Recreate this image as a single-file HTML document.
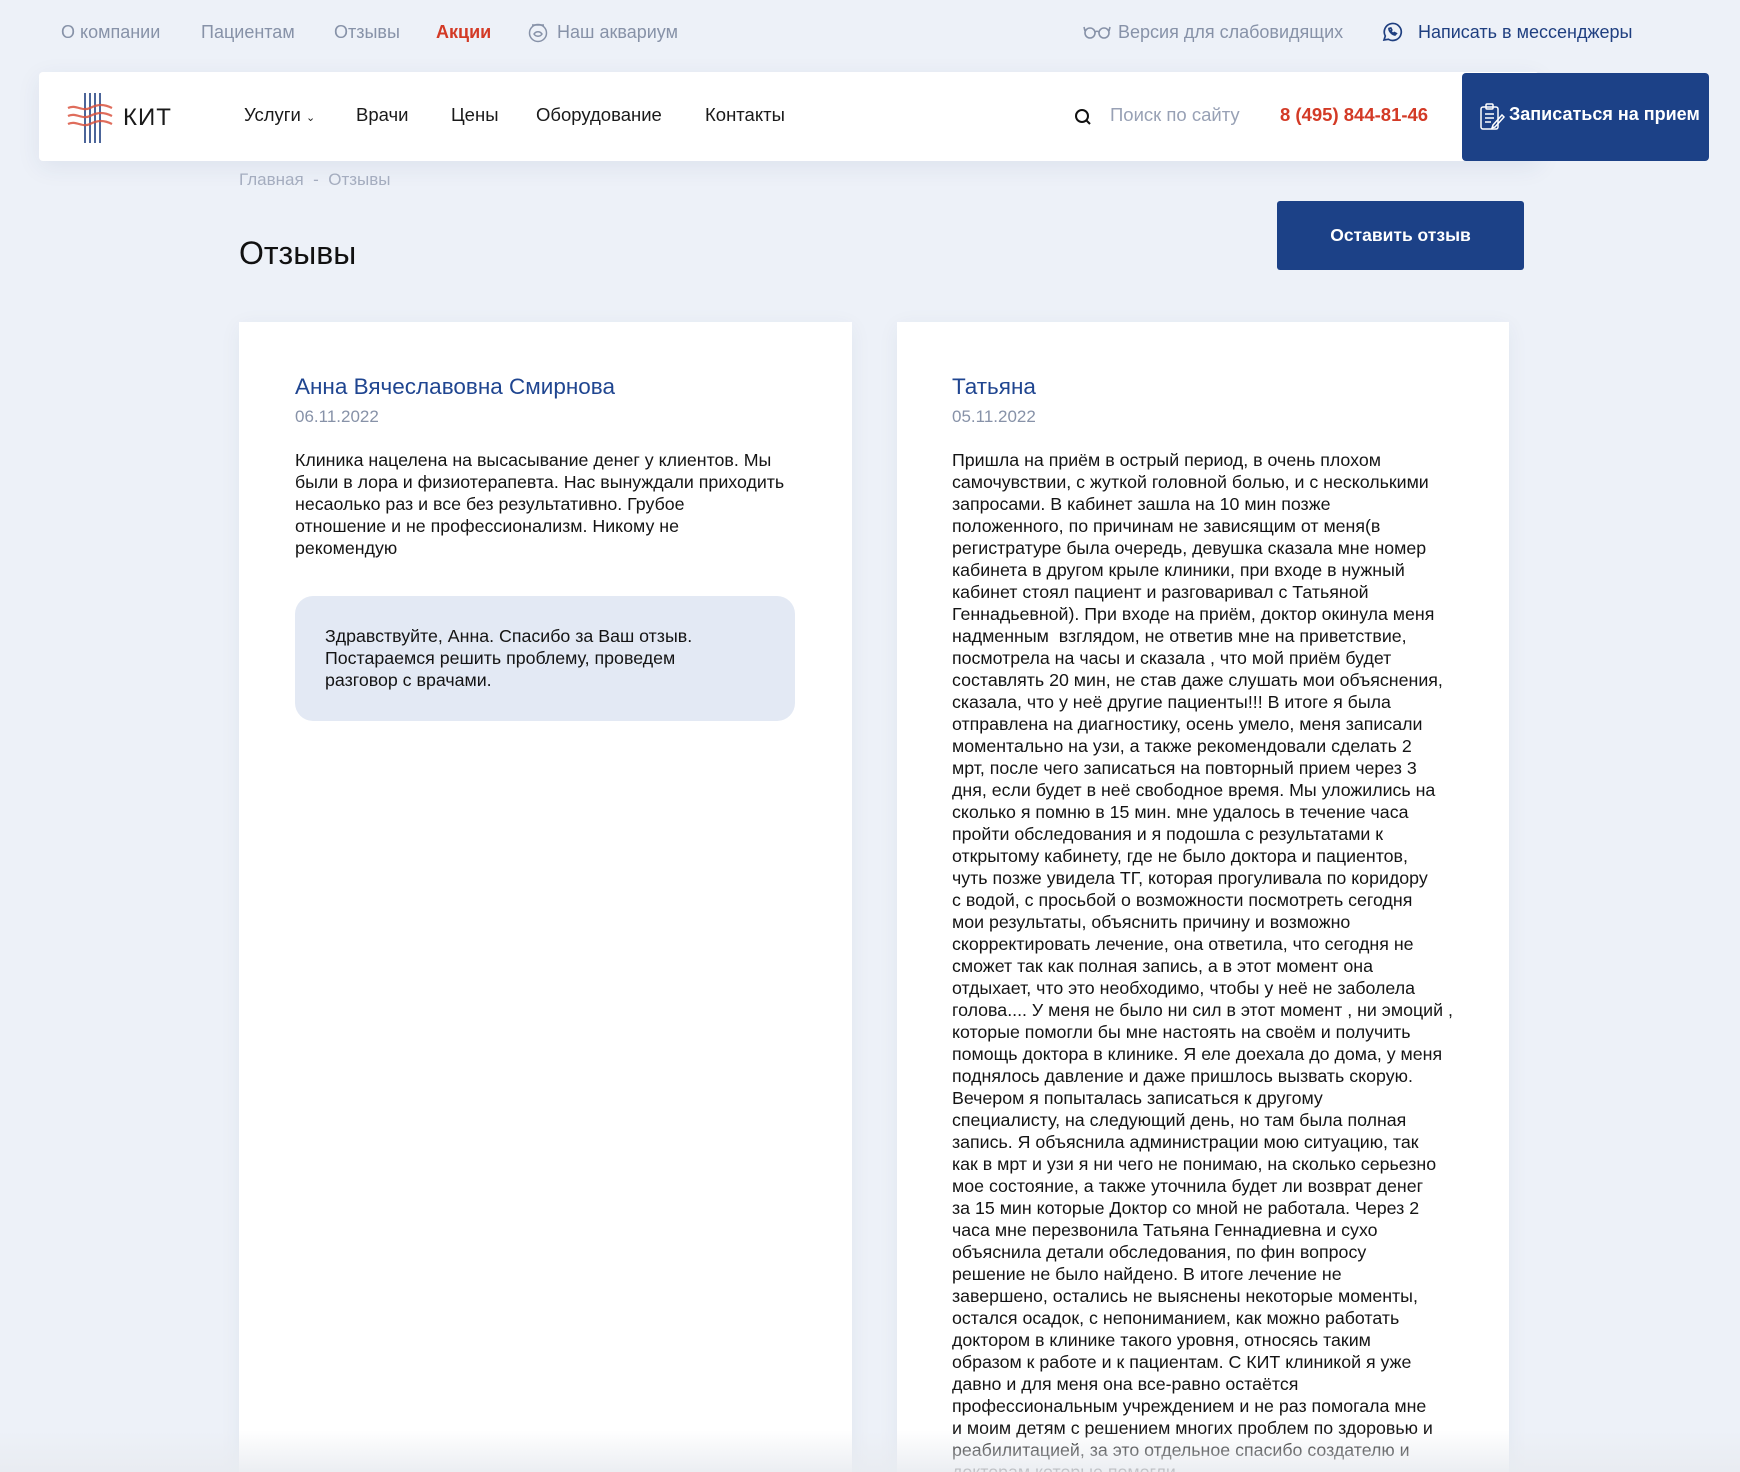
<!DOCTYPE html>
<html style="width:1740px;height:1472px;overflow:hidden"><head><meta charset="utf-8"><style>
*{margin:0;padding:0;box-sizing:border-box}
body{width:1740px;height:1472px;overflow:hidden;background:#edf1f8;font-family:"Liberation Sans",sans-serif;position:relative;color:#111}
.a{position:absolute;white-space:nowrap}
.top{font-size:18px;color:#8792a8;top:22px}
.nav{font-size:18.5px;color:#1a1a1a;top:104px}
.card{position:absolute;background:#fff;top:322px;height:1150px;box-shadow:0 4px 20px rgba(40,60,110,.06)}
.nm{font-size:22.5px;color:#1f4590;top:52px}
.dt{font-size:17px;color:#8792a8;top:85px}
.tx{font-size:17.8px;line-height:22px;color:#141414;white-space:nowrap}
</style></head><body>
<div class="a top" style="left:61px">О компании</div>
<div class="a top" style="left:201px">Пациентам</div>
<div class="a top" style="left:334px">Отзывы</div>
<div class="a top" style="left:436px;color:#d33a26;font-weight:bold">Акции</div>
<svg class="a" style="left:527px;top:21px" width="22" height="22" viewBox="0 0 22 22" fill="none" stroke="#8792a8" stroke-width="1.5"><circle cx="11" cy="12" r="8.5"/><path d="M5 4h12M7 13c2-3 6-3 8 0c-2 3-6 3-8 0z"/></svg>
<div class="a top" style="left:557px">Наш аквариум</div>
<svg class="a" style="left:1083px;top:25px" width="28" height="14" viewBox="0 0 28 14" fill="none" stroke="#8792a8" stroke-width="1.6"><circle cx="7" cy="8" r="5"/><circle cx="21" cy="8" r="5"/><path d="M12 7c1-1 3-1 4 0M2 6L1 2M26 6l1-4"/></svg>
<div class="a top" style="left:1118px">Версия для слабовидящих</div>
<svg class="a" style="left:1381px;top:21px" width="22" height="22" viewBox="0 0 22 22" fill="none" stroke="#1f3f80" stroke-width="1.7"><path d="M3 19l1.3-4A8.5 8.5 0 1 1 7.5 18.3z"/><path d="M8 7.5c0 3 3 6 6 6.5l1.3-1.5-2-1-1 1c-1-.5-2-1.5-2.5-2.5l1-1-1-2z"/></svg>
<div class="a top" style="left:1418px;color:#1f3f80">Написать в мессенджеры</div>

<div class="a" style="left:39px;top:72px;width:1500px;height:89px;background:#fff;border-radius:4px;box-shadow:0 6px 24px rgba(40,60,110,.08)"></div>
<svg class="a" style="left:67px;top:92px" width="52" height="52" viewBox="0 0 52 52" fill="none"><g stroke="#1f3f80" stroke-width="1.6"><path d="M18 1v50M23 1v50M28 1v50M33 1v50"/></g><g stroke="#d9543f" stroke-width="2.2" opacity=".85"><path d="M1 16c8-4 14 4 22 0s14-4 22 0M1 24c8-4 14 4 22 0s14-4 22 0M1 32c8-4 14 4 22 0s14-4 22 0"/></g></svg>
<div class="a" style="left:123px;top:104px;font-size:24px;color:#1a1a1a;letter-spacing:1px">КИТ</div>
<div class="a nav" style="left:244px">Услуги <span style="font-size:11px">⌄</span></div>
<div class="a nav" style="left:356px">Врачи</div>
<div class="a nav" style="left:451px">Цены</div>
<div class="a nav" style="left:536px">Оборудование</div>
<div class="a nav" style="left:705px">Контакты</div>
<svg class="a" style="left:1074px;top:108px" width="18" height="18" viewBox="0 0 18 18" fill="none" stroke="#111" stroke-width="2"><circle cx="8" cy="8" r="6"/><path d="M12.5 12.5l3.5 3.5"/></svg>
<div class="a nav" style="left:1110px;color:#98a1b5">Поиск по сайту</div>
<div class="a nav" style="left:1280px;color:#d33a26;font-weight:bold">8 (495) 844-81-46</div>
<div class="a" style="left:1462px;top:73px;width:247px;height:88px;background:#1c4187;border-radius:4px"></div>
<svg class="a" style="left:1480px;top:103px" width="26" height="28" viewBox="0 0 26 28" fill="none" stroke="#fff" stroke-width="1.5"><rect x="1" y="4" width="17" height="22" rx="2"/><rect x="6" y="1" width="7" height="5" rx="1"/><path d="M5 11h9M5 15h9M5 19h6M24 14l-9 10-3 1 1-3 9-10z"/></svg>
<div class="a" style="left:1509px;top:104px;font-size:18px;font-weight:bold;color:#fff">Записаться на прием</div>

<div class="a" style="left:239px;top:170px;font-size:17px;color:#a5adbf">Главная &nbsp;- &nbsp;Отзывы</div>
<div class="a" style="left:239px;top:235px;font-size:32px;color:#111">Отзывы</div>
<div class="a" style="left:1277px;top:201px;width:247px;height:69px;background:#1c4187;border-radius:3px;color:#fff;font-size:17.5px;font-weight:bold;text-align:center;line-height:69px">Оставить отзыв</div>

<div class="card" style="left:239px;width:613px">
<div class="a nm" style="left:56px">Анна Вячеславовна Смирнова</div>
<div class="a dt" style="left:56px">06.11.2022</div>
<div class="a tx" style="left:56px;top:127px">Клиника нацелена на высасывание денег у клиентов. Мы<br>были в лора и физиотерапевта. Нас вынуждали приходить<br>несаолько раз и все без результативно. Грубое<br>отношение и не профессионализм. Никому не<br>рекомендую</div>
<div class="a" style="left:56px;top:274px;width:500px;height:125px;background:#e3e9f4;border-radius:18px"></div>
<div class="a tx" style="left:86px;top:303px">Здравствуйте, Анна. Спасибо за Ваш отзыв.<br>Постараемся решить проблему, проведем<br>разговор с врачами.</div>
</div>

<div class="card" style="left:897px;width:612px">
<div class="a nm" style="left:55px">Татьяна</div>
<div class="a dt" style="left:55px">05.11.2022</div>
<div class="a tx" style="left:55px;top:127px">Пришла на приём в острый период, в очень плохом<br>самочувствии, с жуткой головной болью, и с несколькими<br>запросами. В кабинет зашла на 10 мин позже<br>положенного, по причинам не зависящим от меня(в<br>регистратуре была очередь, девушка сказала мне номер<br>кабинета в другом крыле клиники, при входе в нужный<br>кабинет стоял пациент и разговаривал с Татьяной<br>Геннадьевной). При входе на приём, доктор окинула меня<br>надменным &nbsp;взглядом, не ответив мне на приветствие,<br>посмотрела на часы и сказала , что мой приём будет<br>составлять 20 мин, не став даже слушать мои объяснения,<br>сказала, что у неё другие пациенты!!! В итоге я была<br>отправлена на диагностику, осень умело, меня записали<br>моментально на узи, а также рекомендовали сделать 2<br>мрт, после чего записаться на повторный прием через 3<br>дня, если будет в неё свободное время. Мы уложились на<br>сколько я помню в 15 мин. мне удалось в течение часа<br>пройти обследования и я подошла с результатами к<br>открытому кабинету, где не было доктора и пациентов,<br>чуть позже увидела ТГ, которая прогуливала по коридору<br>с водой, с просьбой о возможности посмотреть сегодня<br>мои результаты, объяснить причину и возможно<br>скорректировать лечение, она ответила, что сегодня не<br>сможет так как полная запись, а в этот момент она<br>отдыхает, что это необходимо, чтобы у неё не заболела<br>голова.... У меня не было ни сил в этот момент , ни эмоций ,<br>которые помогли бы мне настоять на своём и получить<br>помощь доктора в клинике. Я еле доехала до дома, у меня<br>поднялось давление и даже пришлось вызвать скорую.<br>Вечером я попыталась записаться к другому<br>специалисту, на следующий день, но там была полная<br>запись. Я объяснила администрации мою ситуацию, так<br>как в мрт и узи я ни чего не понимаю, на сколько серьезно<br>мое состояние, а также уточнила будет ли возврат денег<br>за 15 мин которые Доктор со мной не работала. Через 2<br>часа мне перезвонила Татьяна Геннадиевна и сухо<br>объяснила детали обследования, по фин вопросу<br>решение не было найдено. В итоге лечение не<br>завершено, остались не выяснены некоторые моменты,<br>остался осадок, с непониманием, как можно работать<br>доктором в клинике такого уровня, относясь таким<br>образом к работе и к пациентам. С КИТ клиникой я уже<br>давно и для меня она все-равно остаётся<br>профессиональным учреждением и не раз помогала мне<br>и моим детям с решением многих проблем по здоровью и<br>реабилитацией, за это отдельное спасибо создателю и<br>докторам которые помогли</div>
</div>
<div class="a" style="left:0;top:1430px;width:1740px;height:42px;background:linear-gradient(rgba(240,242,246,0),rgba(232,235,240,.85))"></div>
</body></html>
